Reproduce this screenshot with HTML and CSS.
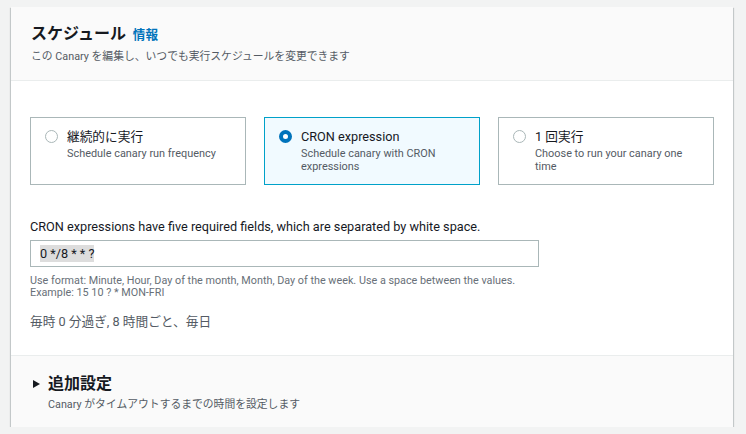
FILE: index.html
```html
<!DOCTYPE html>
<html lang="ja">
<head>
<meta charset="utf-8">
<link rel="stylesheet" href="styles.css">
</head>
<body>
<section class="card">
  <header class="card-header">
    <h2 class="title">スケジュール <a class="info" href="#">情報</a></h2>
    <p class="desc">この Canary を編集し、いつでも実行スケジュールを変更できます</p>
  </header>
  <div class="card-body">
    <div class="tiles">
      <label class="tile">
        <span class="radio"></span>
        <span class="tile-text">
          <span class="tile-label">継続的に実行</span>
          <span class="tile-desc">Schedule canary run frequency</span>
        </span>
      </label>
      <label class="tile selected">
        <span class="radio checked"></span>
        <span class="tile-text">
          <span class="tile-label">CRON expression</span>
          <span class="tile-desc">Schedule canary with CRON expressions</span>
        </span>
      </label>
      <label class="tile">
        <span class="radio"></span>
        <span class="tile-text">
          <span class="tile-label">1 回実行</span>
          <span class="tile-desc">Choose to run your canary one time</span>
        </span>
      </label>
    </div>
    <div class="field">
      <div class="field-label">CRON expressions have five required fields, which are separated by white space.</div>
      <div class="input"><span class="sel">0 */8 * * ?</span></div>
      <div class="hint">Use format: Minute, Hour, Day of the month, Month, Day of the week. Use a space between the values. Example: 15 10 ? * MON-FRI</div>
    </div>
    <p class="summary">毎時 0 分過ぎ, 8 時間ごと、毎日</p>
  </div>
  <footer class="card-footer">
    <h3 class="exp-title"><span class="caret"></span>追加設定</h3>
    <p class="exp-desc">Canary がタイムアウトするまでの時間を設定します</p>
  </footer>
</section>
</body>
</html>
```
FILE: styles.css
```css
* { box-sizing: border-box; }
html, body { margin: 0; }
body {
  background: #f2f3f3;
  padding: 7px 13px 0 11px;
  font-family: Roboto, "Noto Sans CJK JP", sans-serif;
  color: #16191f;
  overflow: hidden;
}
.card {
  background: #fff;
  box-shadow: 0 1px 1px 0 rgba(0,28,36,.3), 1px 1px 1px 0 rgba(0,28,36,.15), -1px 1px 1px 0 rgba(0,28,36,.15);
}
.card-header {
  background: #fafafa;
  border-bottom: 1px solid #eaeded;
  padding: 17px 20px 0 20px;
  height: 74px;
}
.title {
  margin: 0;
  font-size: 16px;
  line-height: 20px;
  font-weight: 700;
}
.info {
  color: #0073bb;
  font-size: 12.6px;
  font-weight: 700;
  text-decoration: none;
  margin-left: 3px;
}
.desc {
  margin: 4px 0 0;
  font-size: 10.8px;
  line-height: 15px;
  color: #545b64;
}
.card-body {
  padding: 36px 19px 0 19px;
  height: 275px;
  border-bottom: 1px solid #eaeded;
}
.tiles {
  display: grid;
  grid-template-columns: repeat(3, 216px);
  gap: 18px;
}
.tile {
  display: flex;
  align-items: flex-start;
  gap: 8px;
  height: 68px;
  border: 1px solid #aab7b8;
  padding: 10px 14px;
}
.tile.selected {
  border-color: #00a1c9;
  background: #f1faff;
}
.radio {
  flex: none;
  width: 13px;
  height: 13px;
  border-radius: 50%;
  border: 1px solid #aab7b8;
  background: #fff;
  margin: 2px 1px 0 0;
}
.radio.checked {
  border: 4px solid #0073bb;
}
.tile-text { display: flex; flex-direction: column; }
.tile-label { font-size: 12.7px; line-height: 17px; }
.tile-desc { font-size: 10.9px; line-height: 12.5px; color: #545b64; margin-top: 3px; }
.field { margin-top: 33px; width: 509px; }
.field-label { font-size: 12.7px; line-height: 17px; }
.input {
  margin-top: 5px;
  height: 27px;
  border: 1px solid #aab7b8;
  padding: 3px 9px;
  font-size: 12.7px;
  line-height: 19px;
}
.sel { background: #dddddd; padding: 1px 0; }
.hint {
  margin-top: 8px;
  font-size: 10.8px;
  line-height: 12px;
  color: #687078;
}
.summary {
  margin: 15px 0 0;
  font-size: 12.7px;
  line-height: 16px;
  color: #545b64;
}
.card-footer {
  background: #fafafa;
  height: 71px;
  padding: 18px 20px 0 22px;
}
.exp-title {
  margin: 0;
  font-size: 16px;
  line-height: 20px;
  font-weight: 700;
  display: flex;
  align-items: center;
}
.caret {
  width: 0; height: 0;
  border-left: 7px solid #16191f;
  border-top: 4px solid transparent;
  border-bottom: 4px solid transparent;
  margin-right: 8px;
}
.exp-desc {
  margin: 3px 0 0 15px;
  font-size: 10.8px;
  line-height: 15px;
  color: #545b64;
}
```
